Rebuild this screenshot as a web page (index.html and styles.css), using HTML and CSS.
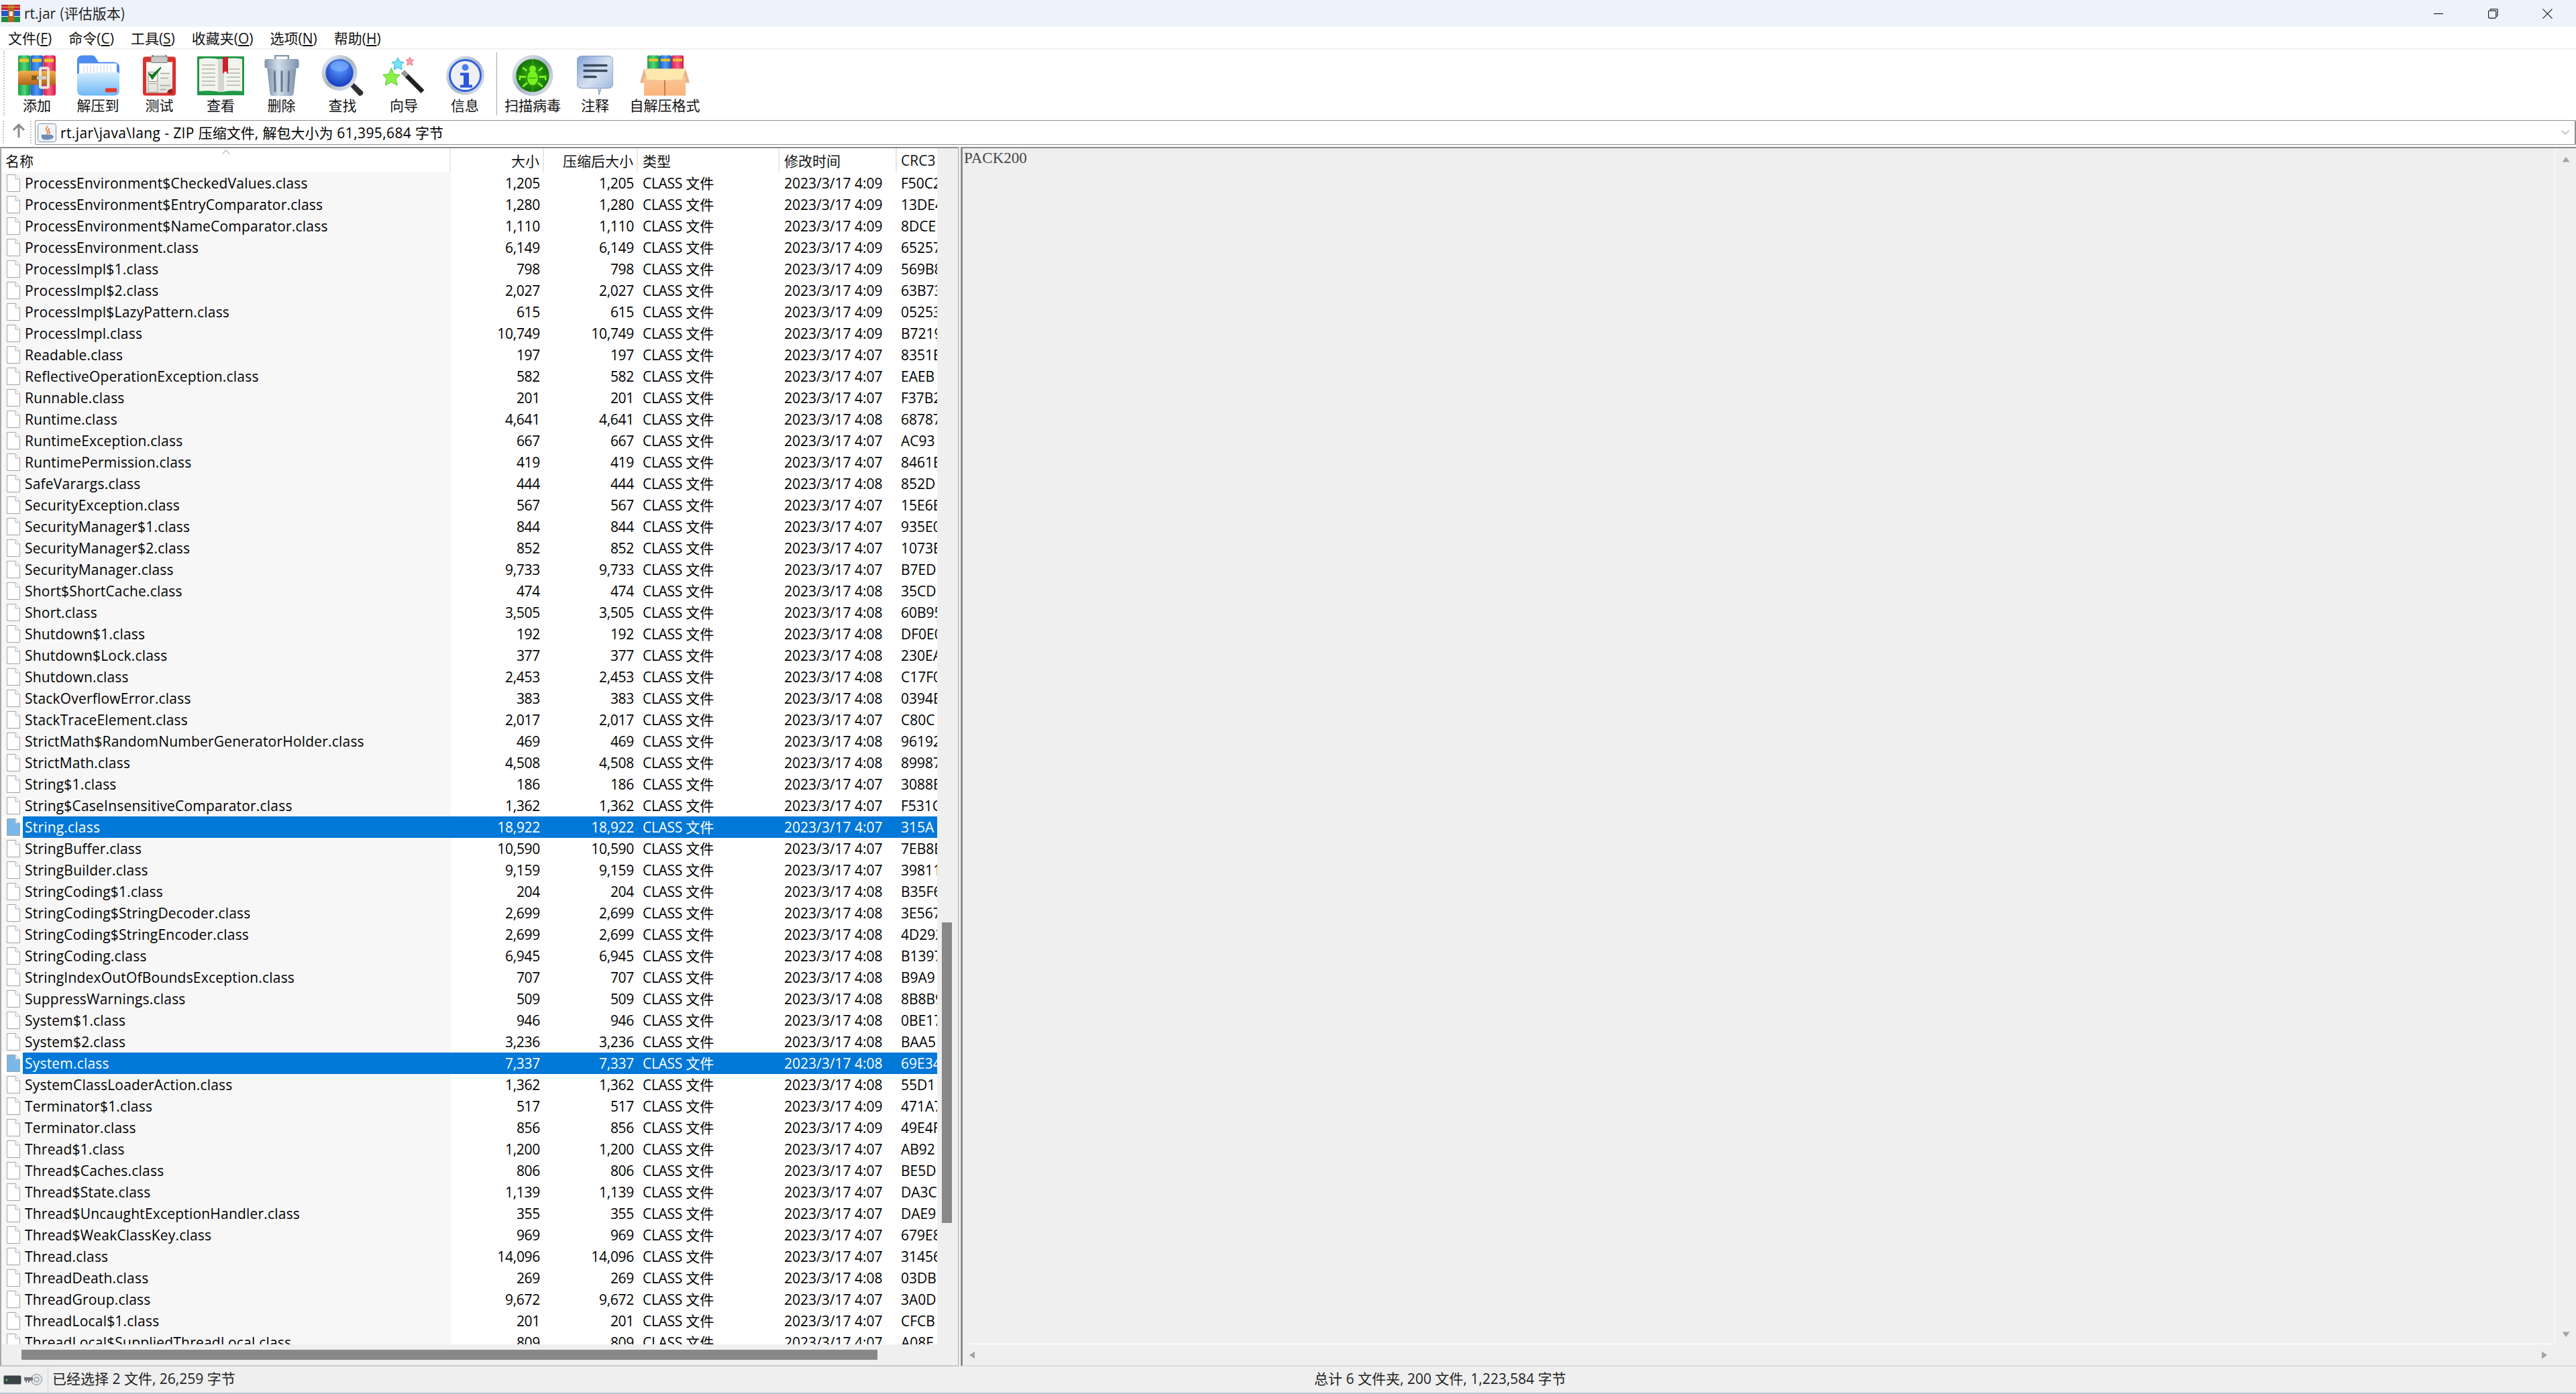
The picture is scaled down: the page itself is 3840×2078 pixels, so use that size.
FILE: index.html
```html
<!DOCTYPE html>
<html lang="zh-CN">
<head>
<meta charset="utf-8">
<title>rt.jar (评估版本)</title>
<link rel="stylesheet" href="styles.css">
</head>
<body>
<svg class="defs" aria-hidden="true">
<defs>
<linearGradient id="gGreen" x1="0" x2="1" y1="0" y2="0"><stop offset="0" stop-color="#1f9a4a"/><stop offset=".5" stop-color="#4fd878"/><stop offset="1" stop-color="#169043"/></linearGradient>
<linearGradient id="gBlue" x1="0" x2="1" y1="0" y2="0"><stop offset="0" stop-color="#1f5fd0"/><stop offset=".5" stop-color="#4f9cf4"/><stop offset="1" stop-color="#1a55c4"/></linearGradient>
<linearGradient id="gRed" x1="0" x2="1" y1="0" y2="0"><stop offset="0" stop-color="#d91f4e"/><stop offset=".5" stop-color="#fb5f86"/><stop offset="1" stop-color="#cf1a48"/></linearGradient>
<linearGradient id="gBelt" x1="0" x2="0" y1="0" y2="1"><stop offset="0" stop-color="#f2b24a"/><stop offset="1" stop-color="#b2641c"/></linearGradient>
<linearGradient id="gFold" x1="0" x2="0" y1="0" y2="1"><stop offset="0" stop-color="#d6eefe"/><stop offset="1" stop-color="#6db8f6"/></linearGradient>
<linearGradient id="gPage" x1="0" x2="0" y1="0" y2="1"><stop offset="0" stop-color="#ffffff"/><stop offset="1" stop-color="#dfdfd8"/></linearGradient>
<linearGradient id="gCan" x1="0" x2="1" y1="0" y2="0"><stop offset="0" stop-color="#7f94ad"/><stop offset=".4" stop-color="#d3deea"/><stop offset="1" stop-color="#7c90aa"/></linearGradient>
<linearGradient id="gSilver" x1="0" x2="1" y1="0" y2="1"><stop offset="0" stop-color="#f2f5f9"/><stop offset=".5" stop-color="#a8b4c4"/><stop offset="1" stop-color="#e6ebf1"/></linearGradient>
<radialGradient id="gSphere" cx=".5" cy=".35" r=".7"><stop offset="0" stop-color="#5f9cff"/><stop offset="1" stop-color="#0f35b8"/></radialGradient>
<radialGradient id="gDisc" cx=".5" cy=".5" r=".55"><stop offset="0" stop-color="#3fae12"/><stop offset="1" stop-color="#0f6e08"/></radialGradient>
<linearGradient id="gNote" x1="0" x2="1" y1="0" y2="1"><stop offset="0" stop-color="#7e9fd6"/><stop offset=".5" stop-color="#d7e1f0"/><stop offset="1" stop-color="#97b0d8"/></linearGradient>
<linearGradient id="gBox" x1="0" x2="0" y1="0" y2="1"><stop offset="0" stop-color="#f7c79b"/><stop offset="1" stop-color="#ffb27a"/></linearGradient>
<symbol id="file" viewBox="0 0 20 26"><path d="M.5.5H13L19.5 7v18.5H.5z" stroke="#a3a3a3" stroke-width="1"/><path d="M13 .5V7h6.5" fill="#f4f4f4" stroke="#b5b5b5" stroke-width="1"/></symbol>
</defs>
</svg>
<div class="app">
  <header class="titlebar">
    <svg class="appicon" viewBox="0 0 28 26"><rect width="28" height="8" fill="#c8253f"/><rect y="9" width="28" height="8" fill="#2a58c0"/><rect y="18" width="28" height="8" fill="#1f8f45"/><rect x="10" y="0" width="9" height="26" fill="#b7651f"/><rect x="12" y="10" width="5" height="7" fill="#f3efe0"/><rect x="0" y="3" width="28" height="1" fill="#e7c23d"/></svg>
    <span class="apptitle">rt.jar <span class="cj">(评估版本)</span></span>
    <div class="winbtns">
      <svg class="winbtn" viewBox="0 0 16 16"><path d="M0 8h15" stroke="#111" stroke-width="1.2"/></svg>
      <svg class="winbtn" viewBox="0 0 16 16"><path d="M3.5 2.5V2q0-1.500 1.500-1.500h8q2 0 2 2v8q0 1.500-1.500 1.500H13" fill="none" stroke="#111" stroke-width="1.200"/><rect x=".6" y="3" width="12" height="12" rx="2" fill="none" stroke="#111" stroke-width="1.200"/></svg>
      <svg class="winbtn" viewBox="0 0 16 16"><path d="M.5.500l15 15M15.500.500l-15 15" stroke="#111" stroke-width="1.200"/></svg>
    </div>
  </header>
  <nav class="menubar">
    <span class="menu">文件<span class="lat">(<u>F</u>)</span></span>
    <span class="menu">命令<span class="lat">(<u>C</u>)</span></span>
    <span class="menu">工具<span class="lat">(<u>S</u>)</span></span>
    <span class="menu">收藏夹<span class="lat">(<u>O</u>)</span></span>
    <span class="menu">选项<span class="lat">(<u>N</u>)</span></span>
    <span class="menu">帮助<span class="lat">(<u>H</u>)</span></span>
  </nav>
  <div class="toolbar">
    <span class="grip"></span>
    <div class="tool w92"><svg class="ico" width="56" height="60" viewBox="0 0 56 60"><rect x="0" y="0" width="18.500" height="60" rx="3" fill="url(#gGreen)"/><rect x="18.500" y="0" width="19" height="60" rx="2" fill="url(#gBlue)"/><rect x="37.500" y="0" width="18.500" height="60" rx="3" fill="url(#gRed)"/><rect x="2" y="5" width="14" height="5" fill="#f4c72c"/><rect x="21" y="5" width="14" height="5" fill="#f4c72c"/><rect x="39" y="5" width="14" height="5" fill="#f4c72c"/><rect x="0" y="23" width="56" height="21" rx="3" fill="url(#gBelt)"/><rect x="20" y="30" width="12" height="7" fill="#8a5a18"/><rect x="33" y="19" width="12" height="29" rx="2" fill="none" stroke="#e9e5d8" stroke-width="4"/><rect x="28" y="31" width="14" height="5" fill="#cfcfc6"/></svg><span class="lbl">添加</span></div>
    <div class="tool w90"><svg class="ico" width="63" height="60" viewBox="0 0 63 60"><path d="M0 8q0-8 8-8h14q4 0 6 4l4 6h22q9 0 9 9v32H0z" fill="#4e8cf2"/><rect x="3" y="12" width="56" height="24" fill="#fff"/><path d="M10 15v12M15 15v12M20 15v12M25 15v12M30 15v12M35 15v12M40 15v12M45 15v12M50 15v12" stroke="#c6cfdc" stroke-width="1"/><path d="M0 30q0-4 4-3l55-2q4 0 4 4v23q0 8-8 8H8q-8 0-8-8z" fill="url(#gFold)"/><rect x="42" y="49" width="17" height="6" rx="1" fill="#e8392c"/></svg><span class="lbl">解压到</span></div>
    <div class="tool w93"><svg class="ico" width="49" height="60" viewBox="0 0 49 60"><rect y="2" width="49" height="58" rx="4" fill="#d8322e"/><path d="M5 10h39v40l-8 6H5z" fill="url(#gPage)"/><path d="M36 56q1-6 8-6l-1 7z" fill="#8f2320"/><rect x="12" y="2" width="25" height="9" rx="2" fill="#c7c9c7" stroke="#77797a"/><path d="M14 2q0-3 3-3h15q3 0 3 3" fill="none" stroke="#77797a" stroke-width="2"/><rect x="8" y="25" width="14" height="14" fill="#f7f7f5" stroke="#8b8b86"/><rect x="8" y="42" width="14" height="13" fill="none" stroke="#a5a5a0"/><path d="M9 27l5 8 13-17-10 9-3 3z" fill="#0f7d20" stroke="#0f7d20" stroke-width="2"/><path d="M26 27h14M26 34h12M26 45h14M26 51h8" stroke="#a4a4a0" stroke-width="1.500"/></svg><span class="lbl">测试</span></div>
    <div class="tool w90"><svg class="ico" width="70" height="59" viewBox="0 0 70 59"><rect y="1" width="70" height="58" rx="1" fill="#1f9a45"/><path d="M3 5q16-3 32 1q16-4 32-1v48q-16-2-32 1q-16-3-32-1z" fill="#f4f4ef"/><path d="M31 5h9v49h-9z" fill="#d4d6d0"/><path d="M7 14h20M7 20h20M7 26h20M7 32h20M7 38h20M7 44h20M44 20h20M44 26h20M44 32h20M44 38h20M44 44h20" stroke="#c2c4be" stroke-width="2"/><path d="M38 2h8v25l-4-4-4 4z" fill="#c8232c"/></svg><span class="lbl">查看</span></div>
    <div class="tool w91"><svg class="ico" width="52" height="62" viewBox="0 0 52 62"><path d="M16 7V1h20v6" fill="none" stroke="#8295ab" stroke-width="2.500"/><rect y="6" width="52" height="14" rx="3" fill="url(#gCan)"/><path d="M4 20h44l-4 38q0 4-5 4H13q-5 0-5-4z" fill="url(#gCan)"/><path d="M15 24l1 32M26 24v32M37 24l-1 32" stroke="#64778f" stroke-width="3"/></svg><span class="lbl">删除</span></div>
    <div class="tool w91"><svg class="ico" width="63" height="62" viewBox="0 0 63 62"><path d="M40 44l5-5 18 17q0 6-6 6z" fill="#2e3034"/><circle cx="27" cy="27" r="27" fill="url(#gSilver)"/><circle cx="27" cy="27" r="21" fill="url(#gSphere)"/><ellipse cx="27" cy="17" rx="14" ry="8" fill="#7eb0ff" opacity=".65"/></svg><span class="lbl">查找</span></div>
    <div class="tool w92"><svg class="ico" width="62" height="62" viewBox="0 0 62 62"><path d="M27 28l5-5 30 30-5 5z" fill="#222"/><path d="M27 28l5-5 6 6-5 5z" fill="#9a9a9a"/><path d="M12 20l4 9 9 1-6 6 2 10-9-5-9 5 2-10-6-6 9-1z" fill="#8bf04a" stroke="#49c322"/><path d="M22 4l3 6 6 1-4 4 1 7-6-3-6 3 1-7-4-4 6-1z" fill="#76e4f6" stroke="#2ab4dc"/><path d="M40 3l2 4 4 .500-3 3 1 5-4-2-4 2 1-5-3-3 4-.500z" fill="#f9a0ae" stroke="#e86c80"/></svg><span class="lbl">向导</span></div>
    <div class="tool w90"><svg class="ico" width="57" height="58" viewBox="0 0 57 58"><ellipse cx="28.500" cy="29" rx="28.500" ry="29" fill="url(#gSilver)"/><circle cx="28.500" cy="29" r="23" fill="#eef0f4" stroke="#2d5fe0" stroke-width="3"/><circle cx="28.500" cy="17" r="5" fill="#4a7fef"/><path d="M21 25h13v18h5v4H21v-4h5V29h-5z" fill="#2a55dd"/></svg><span class="lbl">信息</span></div>
    <span class="tsep"></span>
    <div class="tool w102"><svg class="ico" width="62" height="62" viewBox="0 0 62 62"><circle cx="31" cy="31" r="31" fill="url(#gSilver)"/><circle cx="31" cy="31" r="25" fill="url(#gDisc)"/><path d="M31 6v8M31 48v8M6 31h8M48 31h8" stroke="#3fa51a" stroke-width="1.500"/><ellipse cx="31" cy="35" rx="8" ry="11" fill="#76f31e"/><circle cx="31" cy="21" r="5" fill="#76f31e"/><path d="M22 24l-6-5M40 24l6-5M21 33H12l-1 5M41 33h9l1 5M23 42l-7 6M39 42l7 6" stroke="#76f31e" stroke-width="3" fill="none"/><path d="M25 35h12" stroke="#2a8a10" stroke-width="1"/></svg><span class="lbl">扫描病毒</span></div>
    <div class="tool w84"><svg class="ico" width="54" height="58" viewBox="0 0 54 58"><path d="M8 0h38q8 0 8 8v32q0 8-8 8H36L33 58l-1-10H8q-8 0-8-8V8q0-8 8-8z" fill="url(#gNote)" stroke="#7e97c2"/><path d="M11 14h33M11 22h33M11 31h17" stroke="#3c4a60" stroke-width="3.500" stroke-linecap="round"/></svg><span class="lbl">注释</span></div>
    <div class="tool w124"><svg class="ico" width="74" height="60" viewBox="0 0 74 60"><rect x="11" y="0" width="18" height="24" rx="2" fill="url(#gGreen)"/><rect x="29" y="0" width="18" height="24" rx="2" fill="url(#gBlue)"/><rect x="47" y="0" width="18" height="24" rx="2" fill="url(#gRed)"/><rect x="13" y="5" width="14" height="4" fill="#f0c22a"/><rect x="31" y="5" width="14" height="4" fill="#f0c22a"/><rect x="49" y="5" width="14" height="4" fill="#f0c22a"/><path d="M0 41l6-21h62l6 21z" fill="#e5b48a"/><rect x="6" y="32" width="62" height="28" fill="url(#gBox)"/><path d="M6 20h62l-5 16-26 1-26-1z" fill="#fde8ae"/><path d="M37 37v23" stroke="#c4804a" stroke-width="2"/></svg><span class="lbl">自解压格式</span></div>
  </div>
  <div class="addressbar">
    <span class="grip short"></span>
    <svg class="uparrow" viewBox="0 0 20 22"><path d="M10 21V3M2 10l8-8 8 8" fill="none" stroke="#8a8a8a" stroke-width="3"/></svg>
    <span class="grip short"></span>
    <div class="addrbox">
      <svg class="javaicon" viewBox="0 0 28 28"><rect x=".5" y=".5" width="27" height="27" rx="3" fill="#f1f4f9" stroke="#7d8fa5"/><path d="M15 4q-4 4-1 7t-1 6M18 7q-3 2-1 4t0 5" fill="none" stroke="#e2772a" stroke-width="1.500"/><path d="M6 17h15v2q0 5-5 5h-5q-5 0-5-5zM21 18q4 0 2 3t-3 2" fill="#6e8fb5" stroke="#5c7ca0" stroke-width=".500"/></svg>
      <span class="addrtext">rt.jar\java\lang - ZIP <span class="cj">压缩文件</span>, <span class="cj">解包大小为</span> 61,395,684 <span class="cj">字节</span></span>
      <svg class="chevron" viewBox="0 0 12 7"><path d="M.5.500L6 6l5.500-5.500" fill="none" stroke="#777" stroke-width="1"/></svg>
    </div>
  </div>
  <main class="main">
    <section class="leftpanel">
      <div class="listarea">
        <div class="list">
          <div class="row head">
            <span class="hname">名称<svg class="sort" viewBox="0 0 12 7"><path d="M.5 6.500L6 1l5.500 5.500" fill="none" stroke="#8c8c8c"/></svg></span>
            <span class="hnum">大小</span>
            <span class="hnum">压缩后大小</span>
            <span class="htxt">类型</span>
            <span class="htxt">修改时间</span>
            <span class="hlast">CRC3</span>
          </div>
          <div class="rows">
<div class="row"><span class="name"><svg class="fi"><use href="#file"/></svg><span class="nm">ProcessEnvironment$CheckedValues.class</span></span><span class="num">1,205</span><span class="num">1,205</span><span class="type">CLASS <span class="cj">文件</span></span><span class="date">2023/3/17 4:09</span><span class="crc">F50C2</span></div>
<div class="row"><span class="name"><svg class="fi"><use href="#file"/></svg><span class="nm">ProcessEnvironment$EntryComparator.class</span></span><span class="num">1,280</span><span class="num">1,280</span><span class="type">CLASS <span class="cj">文件</span></span><span class="date">2023/3/17 4:09</span><span class="crc">13DE4</span></div>
<div class="row"><span class="name"><svg class="fi"><use href="#file"/></svg><span class="nm">ProcessEnvironment$NameComparator.class</span></span><span class="num">1,110</span><span class="num">1,110</span><span class="type">CLASS <span class="cj">文件</span></span><span class="date">2023/3/17 4:09</span><span class="crc">8DCE</span></div>
<div class="row"><span class="name"><svg class="fi"><use href="#file"/></svg><span class="nm">ProcessEnvironment.class</span></span><span class="num">6,149</span><span class="num">6,149</span><span class="type">CLASS <span class="cj">文件</span></span><span class="date">2023/3/17 4:09</span><span class="crc">65257</span></div>
<div class="row"><span class="name"><svg class="fi"><use href="#file"/></svg><span class="nm">ProcessImpl$1.class</span></span><span class="num">798</span><span class="num">798</span><span class="type">CLASS <span class="cj">文件</span></span><span class="date">2023/3/17 4:09</span><span class="crc">569B8</span></div>
<div class="row"><span class="name"><svg class="fi"><use href="#file"/></svg><span class="nm">ProcessImpl$2.class</span></span><span class="num">2,027</span><span class="num">2,027</span><span class="type">CLASS <span class="cj">文件</span></span><span class="date">2023/3/17 4:09</span><span class="crc">63B73</span></div>
<div class="row"><span class="name"><svg class="fi"><use href="#file"/></svg><span class="nm">ProcessImpl$LazyPattern.class</span></span><span class="num">615</span><span class="num">615</span><span class="type">CLASS <span class="cj">文件</span></span><span class="date">2023/3/17 4:09</span><span class="crc">05253</span></div>
<div class="row"><span class="name"><svg class="fi"><use href="#file"/></svg><span class="nm">ProcessImpl.class</span></span><span class="num">10,749</span><span class="num">10,749</span><span class="type">CLASS <span class="cj">文件</span></span><span class="date">2023/3/17 4:09</span><span class="crc">B7219</span></div>
<div class="row"><span class="name"><svg class="fi"><use href="#file"/></svg><span class="nm">Readable.class</span></span><span class="num">197</span><span class="num">197</span><span class="type">CLASS <span class="cj">文件</span></span><span class="date">2023/3/17 4:07</span><span class="crc">8351E</span></div>
<div class="row"><span class="name"><svg class="fi"><use href="#file"/></svg><span class="nm">ReflectiveOperationException.class</span></span><span class="num">582</span><span class="num">582</span><span class="type">CLASS <span class="cj">文件</span></span><span class="date">2023/3/17 4:07</span><span class="crc">EAEB</span></div>
<div class="row"><span class="name"><svg class="fi"><use href="#file"/></svg><span class="nm">Runnable.class</span></span><span class="num">201</span><span class="num">201</span><span class="type">CLASS <span class="cj">文件</span></span><span class="date">2023/3/17 4:07</span><span class="crc">F37B2</span></div>
<div class="row"><span class="name"><svg class="fi"><use href="#file"/></svg><span class="nm">Runtime.class</span></span><span class="num">4,641</span><span class="num">4,641</span><span class="type">CLASS <span class="cj">文件</span></span><span class="date">2023/3/17 4:08</span><span class="crc">68787</span></div>
<div class="row"><span class="name"><svg class="fi"><use href="#file"/></svg><span class="nm">RuntimeException.class</span></span><span class="num">667</span><span class="num">667</span><span class="type">CLASS <span class="cj">文件</span></span><span class="date">2023/3/17 4:07</span><span class="crc">AC93</span></div>
<div class="row"><span class="name"><svg class="fi"><use href="#file"/></svg><span class="nm">RuntimePermission.class</span></span><span class="num">419</span><span class="num">419</span><span class="type">CLASS <span class="cj">文件</span></span><span class="date">2023/3/17 4:07</span><span class="crc">8461E</span></div>
<div class="row"><span class="name"><svg class="fi"><use href="#file"/></svg><span class="nm">SafeVarargs.class</span></span><span class="num">444</span><span class="num">444</span><span class="type">CLASS <span class="cj">文件</span></span><span class="date">2023/3/17 4:08</span><span class="crc">852D</span></div>
<div class="row"><span class="name"><svg class="fi"><use href="#file"/></svg><span class="nm">SecurityException.class</span></span><span class="num">567</span><span class="num">567</span><span class="type">CLASS <span class="cj">文件</span></span><span class="date">2023/3/17 4:07</span><span class="crc">15E6E</span></div>
<div class="row"><span class="name"><svg class="fi"><use href="#file"/></svg><span class="nm">SecurityManager$1.class</span></span><span class="num">844</span><span class="num">844</span><span class="type">CLASS <span class="cj">文件</span></span><span class="date">2023/3/17 4:07</span><span class="crc">935E0</span></div>
<div class="row"><span class="name"><svg class="fi"><use href="#file"/></svg><span class="nm">SecurityManager$2.class</span></span><span class="num">852</span><span class="num">852</span><span class="type">CLASS <span class="cj">文件</span></span><span class="date">2023/3/17 4:07</span><span class="crc">1073E</span></div>
<div class="row"><span class="name"><svg class="fi"><use href="#file"/></svg><span class="nm">SecurityManager.class</span></span><span class="num">9,733</span><span class="num">9,733</span><span class="type">CLASS <span class="cj">文件</span></span><span class="date">2023/3/17 4:07</span><span class="crc">B7ED</span></div>
<div class="row"><span class="name"><svg class="fi"><use href="#file"/></svg><span class="nm">Short$ShortCache.class</span></span><span class="num">474</span><span class="num">474</span><span class="type">CLASS <span class="cj">文件</span></span><span class="date">2023/3/17 4:08</span><span class="crc">35CD</span></div>
<div class="row"><span class="name"><svg class="fi"><use href="#file"/></svg><span class="nm">Short.class</span></span><span class="num">3,505</span><span class="num">3,505</span><span class="type">CLASS <span class="cj">文件</span></span><span class="date">2023/3/17 4:08</span><span class="crc">60B95</span></div>
<div class="row"><span class="name"><svg class="fi"><use href="#file"/></svg><span class="nm">Shutdown$1.class</span></span><span class="num">192</span><span class="num">192</span><span class="type">CLASS <span class="cj">文件</span></span><span class="date">2023/3/17 4:08</span><span class="crc">DF0E0</span></div>
<div class="row"><span class="name"><svg class="fi"><use href="#file"/></svg><span class="nm">Shutdown$Lock.class</span></span><span class="num">377</span><span class="num">377</span><span class="type">CLASS <span class="cj">文件</span></span><span class="date">2023/3/17 4:08</span><span class="crc">230EA</span></div>
<div class="row"><span class="name"><svg class="fi"><use href="#file"/></svg><span class="nm">Shutdown.class</span></span><span class="num">2,453</span><span class="num">2,453</span><span class="type">CLASS <span class="cj">文件</span></span><span class="date">2023/3/17 4:08</span><span class="crc">C17F0</span></div>
<div class="row"><span class="name"><svg class="fi"><use href="#file"/></svg><span class="nm">StackOverflowError.class</span></span><span class="num">383</span><span class="num">383</span><span class="type">CLASS <span class="cj">文件</span></span><span class="date">2023/3/17 4:08</span><span class="crc">0394E</span></div>
<div class="row"><span class="name"><svg class="fi"><use href="#file"/></svg><span class="nm">StackTraceElement.class</span></span><span class="num">2,017</span><span class="num">2,017</span><span class="type">CLASS <span class="cj">文件</span></span><span class="date">2023/3/17 4:07</span><span class="crc">C80C</span></div>
<div class="row"><span class="name"><svg class="fi"><use href="#file"/></svg><span class="nm">StrictMath$RandomNumberGeneratorHolder.class</span></span><span class="num">469</span><span class="num">469</span><span class="type">CLASS <span class="cj">文件</span></span><span class="date">2023/3/17 4:08</span><span class="crc">96192</span></div>
<div class="row"><span class="name"><svg class="fi"><use href="#file"/></svg><span class="nm">StrictMath.class</span></span><span class="num">4,508</span><span class="num">4,508</span><span class="type">CLASS <span class="cj">文件</span></span><span class="date">2023/3/17 4:08</span><span class="crc">89987</span></div>
<div class="row"><span class="name"><svg class="fi"><use href="#file"/></svg><span class="nm">String$1.class</span></span><span class="num">186</span><span class="num">186</span><span class="type">CLASS <span class="cj">文件</span></span><span class="date">2023/3/17 4:07</span><span class="crc">3088E</span></div>
<div class="row"><span class="name"><svg class="fi"><use href="#file"/></svg><span class="nm">String$CaseInsensitiveComparator.class</span></span><span class="num">1,362</span><span class="num">1,362</span><span class="type">CLASS <span class="cj">文件</span></span><span class="date">2023/3/17 4:07</span><span class="crc">F531C</span></div>
<div class="row sel"><span class="name"><svg class="fi"><use href="#file"/></svg><span class="nm">String.class</span></span><span class="num">18,922</span><span class="num">18,922</span><span class="type">CLASS <span class="cj">文件</span></span><span class="date">2023/3/17 4:07</span><span class="crc">315A</span></div>
<div class="row"><span class="name"><svg class="fi"><use href="#file"/></svg><span class="nm">StringBuffer.class</span></span><span class="num">10,590</span><span class="num">10,590</span><span class="type">CLASS <span class="cj">文件</span></span><span class="date">2023/3/17 4:07</span><span class="crc">7EB8E</span></div>
<div class="row"><span class="name"><svg class="fi"><use href="#file"/></svg><span class="nm">StringBuilder.class</span></span><span class="num">9,159</span><span class="num">9,159</span><span class="type">CLASS <span class="cj">文件</span></span><span class="date">2023/3/17 4:07</span><span class="crc">39811</span></div>
<div class="row"><span class="name"><svg class="fi"><use href="#file"/></svg><span class="nm">StringCoding$1.class</span></span><span class="num">204</span><span class="num">204</span><span class="type">CLASS <span class="cj">文件</span></span><span class="date">2023/3/17 4:08</span><span class="crc">B35F6</span></div>
<div class="row"><span class="name"><svg class="fi"><use href="#file"/></svg><span class="nm">StringCoding$StringDecoder.class</span></span><span class="num">2,699</span><span class="num">2,699</span><span class="type">CLASS <span class="cj">文件</span></span><span class="date">2023/3/17 4:08</span><span class="crc">3E567</span></div>
<div class="row"><span class="name"><svg class="fi"><use href="#file"/></svg><span class="nm">StringCoding$StringEncoder.class</span></span><span class="num">2,699</span><span class="num">2,699</span><span class="type">CLASS <span class="cj">文件</span></span><span class="date">2023/3/17 4:08</span><span class="crc">4D292</span></div>
<div class="row"><span class="name"><svg class="fi"><use href="#file"/></svg><span class="nm">StringCoding.class</span></span><span class="num">6,945</span><span class="num">6,945</span><span class="type">CLASS <span class="cj">文件</span></span><span class="date">2023/3/17 4:08</span><span class="crc">B1397</span></div>
<div class="row"><span class="name"><svg class="fi"><use href="#file"/></svg><span class="nm">StringIndexOutOfBoundsException.class</span></span><span class="num">707</span><span class="num">707</span><span class="type">CLASS <span class="cj">文件</span></span><span class="date">2023/3/17 4:08</span><span class="crc">B9A9</span></div>
<div class="row"><span class="name"><svg class="fi"><use href="#file"/></svg><span class="nm">SuppressWarnings.class</span></span><span class="num">509</span><span class="num">509</span><span class="type">CLASS <span class="cj">文件</span></span><span class="date">2023/3/17 4:08</span><span class="crc">8B8B9</span></div>
<div class="row"><span class="name"><svg class="fi"><use href="#file"/></svg><span class="nm">System$1.class</span></span><span class="num">946</span><span class="num">946</span><span class="type">CLASS <span class="cj">文件</span></span><span class="date">2023/3/17 4:08</span><span class="crc">0BE17</span></div>
<div class="row"><span class="name"><svg class="fi"><use href="#file"/></svg><span class="nm">System$2.class</span></span><span class="num">3,236</span><span class="num">3,236</span><span class="type">CLASS <span class="cj">文件</span></span><span class="date">2023/3/17 4:08</span><span class="crc">BAA5</span></div>
<div class="row sel"><span class="name"><svg class="fi"><use href="#file"/></svg><span class="nm">System.class</span></span><span class="num">7,337</span><span class="num">7,337</span><span class="type">CLASS <span class="cj">文件</span></span><span class="date">2023/3/17 4:08</span><span class="crc">69E34</span></div>
<div class="row"><span class="name"><svg class="fi"><use href="#file"/></svg><span class="nm">SystemClassLoaderAction.class</span></span><span class="num">1,362</span><span class="num">1,362</span><span class="type">CLASS <span class="cj">文件</span></span><span class="date">2023/3/17 4:08</span><span class="crc">55D1</span></div>
<div class="row"><span class="name"><svg class="fi"><use href="#file"/></svg><span class="nm">Terminator$1.class</span></span><span class="num">517</span><span class="num">517</span><span class="type">CLASS <span class="cj">文件</span></span><span class="date">2023/3/17 4:09</span><span class="crc">471A7</span></div>
<div class="row"><span class="name"><svg class="fi"><use href="#file"/></svg><span class="nm">Terminator.class</span></span><span class="num">856</span><span class="num">856</span><span class="type">CLASS <span class="cj">文件</span></span><span class="date">2023/3/17 4:09</span><span class="crc">49E4F</span></div>
<div class="row"><span class="name"><svg class="fi"><use href="#file"/></svg><span class="nm">Thread$1.class</span></span><span class="num">1,200</span><span class="num">1,200</span><span class="type">CLASS <span class="cj">文件</span></span><span class="date">2023/3/17 4:07</span><span class="crc">AB92</span></div>
<div class="row"><span class="name"><svg class="fi"><use href="#file"/></svg><span class="nm">Thread$Caches.class</span></span><span class="num">806</span><span class="num">806</span><span class="type">CLASS <span class="cj">文件</span></span><span class="date">2023/3/17 4:07</span><span class="crc">BE5D</span></div>
<div class="row"><span class="name"><svg class="fi"><use href="#file"/></svg><span class="nm">Thread$State.class</span></span><span class="num">1,139</span><span class="num">1,139</span><span class="type">CLASS <span class="cj">文件</span></span><span class="date">2023/3/17 4:07</span><span class="crc">DA3C</span></div>
<div class="row"><span class="name"><svg class="fi"><use href="#file"/></svg><span class="nm">Thread$UncaughtExceptionHandler.class</span></span><span class="num">355</span><span class="num">355</span><span class="type">CLASS <span class="cj">文件</span></span><span class="date">2023/3/17 4:07</span><span class="crc">DAE9</span></div>
<div class="row"><span class="name"><svg class="fi"><use href="#file"/></svg><span class="nm">Thread$WeakClassKey.class</span></span><span class="num">969</span><span class="num">969</span><span class="type">CLASS <span class="cj">文件</span></span><span class="date">2023/3/17 4:07</span><span class="crc">679E8</span></div>
<div class="row"><span class="name"><svg class="fi"><use href="#file"/></svg><span class="nm">Thread.class</span></span><span class="num">14,096</span><span class="num">14,096</span><span class="type">CLASS <span class="cj">文件</span></span><span class="date">2023/3/17 4:07</span><span class="crc">31456</span></div>
<div class="row"><span class="name"><svg class="fi"><use href="#file"/></svg><span class="nm">ThreadDeath.class</span></span><span class="num">269</span><span class="num">269</span><span class="type">CLASS <span class="cj">文件</span></span><span class="date">2023/3/17 4:08</span><span class="crc">03DB</span></div>
<div class="row"><span class="name"><svg class="fi"><use href="#file"/></svg><span class="nm">ThreadGroup.class</span></span><span class="num">9,672</span><span class="num">9,672</span><span class="type">CLASS <span class="cj">文件</span></span><span class="date">2023/3/17 4:07</span><span class="crc">3A0D</span></div>
<div class="row"><span class="name"><svg class="fi"><use href="#file"/></svg><span class="nm">ThreadLocal$1.class</span></span><span class="num">201</span><span class="num">201</span><span class="type">CLASS <span class="cj">文件</span></span><span class="date">2023/3/17 4:07</span><span class="crc">CFCB</span></div>
<div class="row"><span class="name"><svg class="fi"><use href="#file"/></svg><span class="nm">ThreadLocal$SuppliedThreadLocal.class</span></span><span class="num">809</span><span class="num">809</span><span class="type">CLASS <span class="cj">文件</span></span><span class="date">2023/3/17 4:07</span><span class="crc">A08F</span></div>
          </div>
        </div>
        <div class="vscroll"><div class="vthumb"></div></div>
      </div>
      <div class="hscroll"><div class="hthumb"></div></div>
    </section>
    <section class="rightpanel">
      <div class="comment-wrap">
        <div class="comment">PACK200</div>
        <div class="rvbar">
          <svg class="arr" viewBox="0 0 12 8"><path d="M6 0l5.500 7.500H.5z" fill="#a3a3a3"/></svg>
          <svg class="arr" viewBox="0 0 12 8"><path d="M6 8L.5.500h11z" fill="#a3a3a3"/></svg>
        </div>
      </div>
      <div class="rhbar">
        <svg class="arrh" viewBox="0 0 8 12"><path d="M0 6l8-5.500v11z" fill="#a3a3a3"/></svg>
        <svg class="arrh" viewBox="0 0 8 12"><path d="M8 6L0 .5v11z" fill="#a3a3a3"/></svg>
      </div>
    </section>
  </main>
  <footer class="statusbar">
    <div class="stat-icons">
      <svg class="drive" viewBox="0 0 27 14"><rect x=".5" y=".5" width="26" height="13" rx="2" fill="#3a4246" stroke="#8f9aa2"/><circle cx="5" cy="7" r="1.500" fill="#59d05c"/></svg>
      <svg class="key" viewBox="0 0 27 17"><circle cx="18.500" cy="8.500" r="8" fill="#e4e6e8" stroke="#85898d"/><circle cx="18.500" cy="8.500" r="3.500" fill="none" stroke="#85898d"/><rect x="0" y="5" width="13" height="5" fill="#6f7478"/><path d="M3 10v3M7 10v3" stroke="#6f7478" stroke-width="2"/></svg>
    </div>
    <div class="stat-left"><span class="cj">已经选择</span> 2 <span class="cj">文件</span>, 26,259 <span class="cj">字节</span></div>
    <div class="stat-right"><span class="cj">总计</span> 6 <span class="cj">文件夹</span>, 200 <span class="cj">文件</span>, 1,223,584 <span class="cj">字节</span></div>
  </footer>
</div>
</body>
</html>
```
FILE: styles.css
```css
html, body { margin: 0; padding: 0; }
body {
  width: 3840px;
  height: 2078px;
  overflow: hidden;
  background: #fff;
  color: #000;
  font-family: "Open Sans", "Noto Sans CJK SC", sans-serif;
  font-size: 21px;
  letter-spacing: 0;
}
.defs { display: block; width: 0; height: 0; }
.cj { font-family: "Noto Sans CJK SC", sans-serif; font-size: 21px; letter-spacing: 0; line-height: 1; }
.lat { font-family: "Open Sans", sans-serif; font-size: 21px; line-height: 1; }
.app { display: flex; flex-direction: column; width: 3840px; height: 2078px; }

.titlebar { height: 40px; background: #eef3fb; display: flex; align-items: center; flex: none; }
.appicon { width: 28px; height: 26px; margin-left: 2px; flex: none; }
.apptitle { margin-left: 6px; color: #222; line-height: 40px; }
.winbtns { margin-left: auto; display: flex; align-items: center; gap: 66px; padding-right: 35px; }
.winbtn { width: 15px; height: 15px; display: block; }

.menubar { height: 32px; background: #fff; border-bottom: 2px solid #f0f0f0; display: flex; flex: none; padding-left: 12px; gap: 25px; box-sizing: content-box; }
.menu { font-family: "Noto Sans CJK SC", sans-serif; font-size: 21px; line-height: 32px; letter-spacing: 0; color: #111; }

.toolbar { height: 104px; display: flex; flex: none; align-items: flex-start; }
.grip { width: 0; height: 96px; margin: 2px 2px 0 5px; border-left: 2px dotted #c8c8c8; flex: none; }
.grip.short { height: 34px; margin: 2px 0 0 4px; }
.tool { display: flex; flex-direction: column; align-items: center; height: 100px; flex: none; padding-top: 8px; box-sizing: border-box; }
.ico { height: 61px; display: block; flex: none; }
.lbl { font-family: "Noto Sans CJK SC", sans-serif; font-size: 21px; letter-spacing: 0; line-height: 28px; margin-top: -1px; color: #111; white-space: nowrap; }
.w92 { width: 92px; } .w90 { width: 90px; } .w93 { width: 93px; } .w91 { width: 91px; }
.w102 { width: 102px; } .w84 { width: 84px; } .w124 { width: 124px; }
.tsep { width: 1px; height: 94px; margin: 4px 2px 0 2px; background: #a8a8a8; flex: none; }

.addressbar { height: 41px; display: flex; flex: none; align-items: flex-start; }
.uparrow { width: 20px; height: 22px; margin: 6px 0 0 12px; flex: none; }
.addrbox { flex: 1; height: 37px; margin: 1px 0 0 5px; box-sizing: border-box; border: 1px solid #8f8f8f; border-right-width: 2px; border-radius: 2px; display: flex; align-items: center; }
.addressbar .grip.short + .uparrow + .grip.short { margin-left: 7px; }
.javaicon { width: 28px; height: 28px; margin-left: 3px; flex: none; }
.addrtext { margin-left: 6px; white-space: nowrap; line-height: 30px; letter-spacing: 0.4px; }
.chevron { width: 12px; height: 7px; margin: 0 8px 0 auto; flex: none; }

.main { height: 1818px; display: flex; flex: none; }
.leftpanel { width: 1430px; box-sizing: border-box; border-left: 2px solid #a8a8a8; border-top: 2px solid #8a8a8a; border-right: 2px solid #c4c4c4; border-bottom: 2px solid #c8c8c8; background: #efefef; display: flex; flex-direction: column; flex: none; }
.listarea { flex: 1; display: flex; min-height: 0; }
.list { width: 1395px; height: 1783px; overflow: hidden; flex: none; }
.rows { width: 1395px; }
.row { display: grid; grid-template-columns: 670px 139px 140px 211px 175px 60px; height: 32px; line-height: 32px; background: #fff; white-space: nowrap; }
.row.head { height: 36px; line-height: 36px; background: #fff; }
.head span { font-family: "Noto Sans CJK SC", sans-serif; font-size: 21px; letter-spacing: 0; box-sizing: border-box; color: #111; }
.head .hlast { font-family: "Open Sans", sans-serif; padding-left: 6px; overflow: hidden; }
.hname { padding-left: 6px; border-right: 2px solid #e8e8e8; position: relative; }
.hnum { text-align: right; padding-right: 5px; border-right: 2px solid #e8e8e8; }
.htxt { padding-left: 7px; border-right: 2px solid #e8e8e8; }
.sort { width: 12px; height: 7px; position: absolute; left: 329px; top: 2px; }
.name { display: flex; background: #f7f7f7; overflow: hidden; }
.fi { width: 20px; height: 26px; margin: 3px 4px 3px 8px; fill: #fff; flex: none; }
.nm { flex: 1; padding-left: 3px; letter-spacing: 0.2px; }
.num { text-align: right; padding-right: 6px; letter-spacing: -0.3px; }
.type { padding-left: 7px; letter-spacing: -0.3px; }
.date { padding-left: 7px; }
.crc { padding-left: 6px; overflow: hidden; }
.sel .name { background: #fff; }
.sel .fi { fill: #7ab8ea; }
.sel .nm, .sel .num, .sel .type, .sel .date, .sel .crc { background: #0078d7; color: #fff; }
.vscroll { flex: 1; padding: 0 9px 0 7px; box-sizing: border-box; }
.vthumb { height: 448px; margin-top: 1154px; background: #888; }
.hscroll { height: 31px; flex: none; padding: 8px 0 0 30px; box-sizing: border-box; }
.hthumb { width: 1276px; height: 15px; background: #888; }

.rightpanel { flex: 1; margin-left: 2px; border-left: 3px solid #8a8a8a; border-top: 2px solid #8a8a8a; border-bottom: 2px solid #dcdcdc; background: #efefef; display: flex; flex-direction: column; min-width: 0; }
.comment-wrap { flex: 1; display: flex; min-height: 0; }
.comment { flex: 1; border-right: 1px solid #fff; border-bottom: 1px solid #fff; font-family: "Liberation Serif", serif; font-size: 23px; color: #444; padding: 2px 0 0 2px; line-height: 26px; }
.rvbar { width: 31px; flex: none; display: flex; flex-direction: column; justify-content: space-between; align-items: center; padding: 13px 0 11px; box-sizing: border-box; }
.arr { width: 12px; height: 8px; display: block; }
.rhbar { height: 31px; flex: none; display: flex; justify-content: space-between; align-items: center; padding: 0 43px 0 10px; box-sizing: border-box; }
.arrh { width: 8px; height: 12px; display: block; }

.statusbar { height: 41px; flex: none; box-sizing: border-box; background: #efefef; border-bottom: 2px solid #b9c0cc; display: flex; align-items: center; line-height: 36px; }
.stat-icons { width: 72px; height: 39px; box-sizing: border-box; border-right: 1px solid #d6d6d6; display: flex; align-items: center; padding-left: 5px; gap: 4px; flex: none; }
.drive { width: 27px; height: 14px; }
.key { width: 27px; height: 17px; }
.stat-left { margin-left: 6px; width: 1881px; flex: none; color: #222; padding-bottom: 3px; }
.stat-right { color: #222; padding-bottom: 3px; }
```
